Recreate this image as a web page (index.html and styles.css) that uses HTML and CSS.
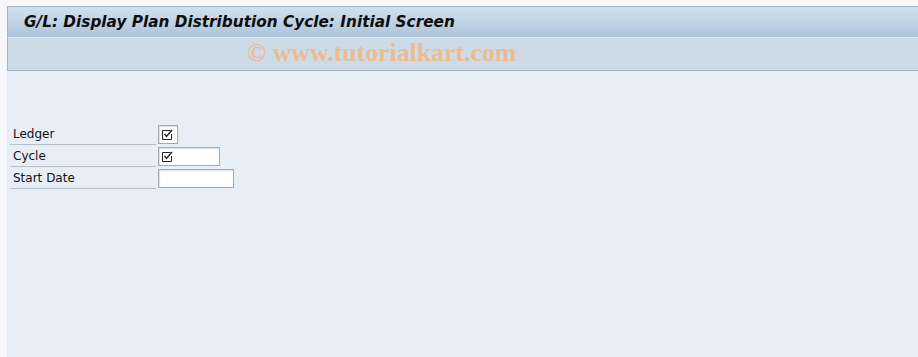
FILE: index.html
```html
<!DOCTYPE html>
<html lang="en">
<head>
    <meta charset="UTF-8">
    <title>G/L: Display Plan Distribution Cycle: Initial Screen</title>
    <link rel="stylesheet" href="styles.css">
</head>
<body>

<div class="screen">
    <div class="title-bar">
        <h1>G/L: Display Plan Distribution Cycle: Initial Screen</h1>
    </div>
    <div class="toolbar">
        <span class="watermark">© www.tutorialkart.com</span>
    </div>

    <div class="content">
        <div class="form">
            <div class="row">
                <label>Ledger</label>
                <div class="field check">
                    <svg class="tick" width="11" height="11" viewBox="0 0 11 11">
                        <path d="M8.5 1.5 H0.5 V10.5 H9.5 V5" fill="none" stroke="#222" stroke-width="1"/>
                        <path d="M2.5 5 L4.5 7.5 L10 1" fill="none" stroke="#222" stroke-width="1.4"/>
                    </svg>
                </div>
            </div>
            <div class="row">
                <label>Cycle</label>
                <div class="field cycle">
                    <svg class="tick" width="11" height="11" viewBox="0 0 11 11">
                        <path d="M8.5 1.5 H0.5 V10.5 H9.5 V5" fill="none" stroke="#222" stroke-width="1"/>
                        <path d="M2.5 5 L4.5 7.5 L10 1" fill="none" stroke="#222" stroke-width="1.4"/>
                    </svg>
                </div>
            </div>
            <div class="row">
                <label>Start Date</label>
                <div class="field date"></div>
            </div>
        </div>
    </div>
</div>

</body>
</html>
```

FILE: styles.css
```css
body {
    margin: 0;
    background-color: #f7f8fb;
    font-family: Tahoma, "DejaVu Sans", sans-serif;
}
.screen {
    margin-left: 7px;
    padding-top: 6px;
    height: 351px;
    display: flex;
    flex-direction: column;
}
.title-bar {
    height: 30px;
    border-top: 1px solid #a3b5ca;
    border-left: 1px solid #a3b5ca;
    border-bottom: 1px solid #e4ecf3;
    background: linear-gradient(#d2e0ec, #adc4dc);
    display: flex;
    align-items: center;
    padding-left: 16px;
}
h1 {
    margin: 0;
    font-size: 15.3px;
    font-weight: bold;
    font-style: italic;
    color: #0d0d0d;
}
.toolbar {
    height: 32px;
    background-color: #cddbe6;
    border-left: 1px solid #a3b5ca;
    border-bottom: 1px solid #a3b5ca;
    padding-left: 239px;
}
.watermark {
    font-family: "Liberation Serif", serif;
    font-weight: bold;
    font-size: 25.8px;
    color: #ecbc90;
    line-height: 30px;
}
.content {
    flex: 1;
    background-color: #e8eef6;
    padding: 52px 0 0 3px;
}
.form {
    width: 227px;
}
.row {
    display: flex;
    align-items: flex-end;
    height: 22px;
}
.row label {
    width: 143px;
    font-size: 12px;
    color: #111;
    padding-left: 3px;
    border-bottom: 1px solid #b8bfc8;
    line-height: 20px;
}
.field {
    margin-left: 2px;
    height: 17px;
    background-color: #fff;
    border: 1px solid #a7a9ab;
    box-shadow: inset 1px 1px 1px #ddd;
    margin-bottom: 1px;
    display: flex;
    align-items: center;
    padding-left: 3px;
    box-sizing: content-box;
}
.check {
    width: 15px;
}
.cycle {
    width: 57px;
}
.date {
    width: 71px;
}
```
